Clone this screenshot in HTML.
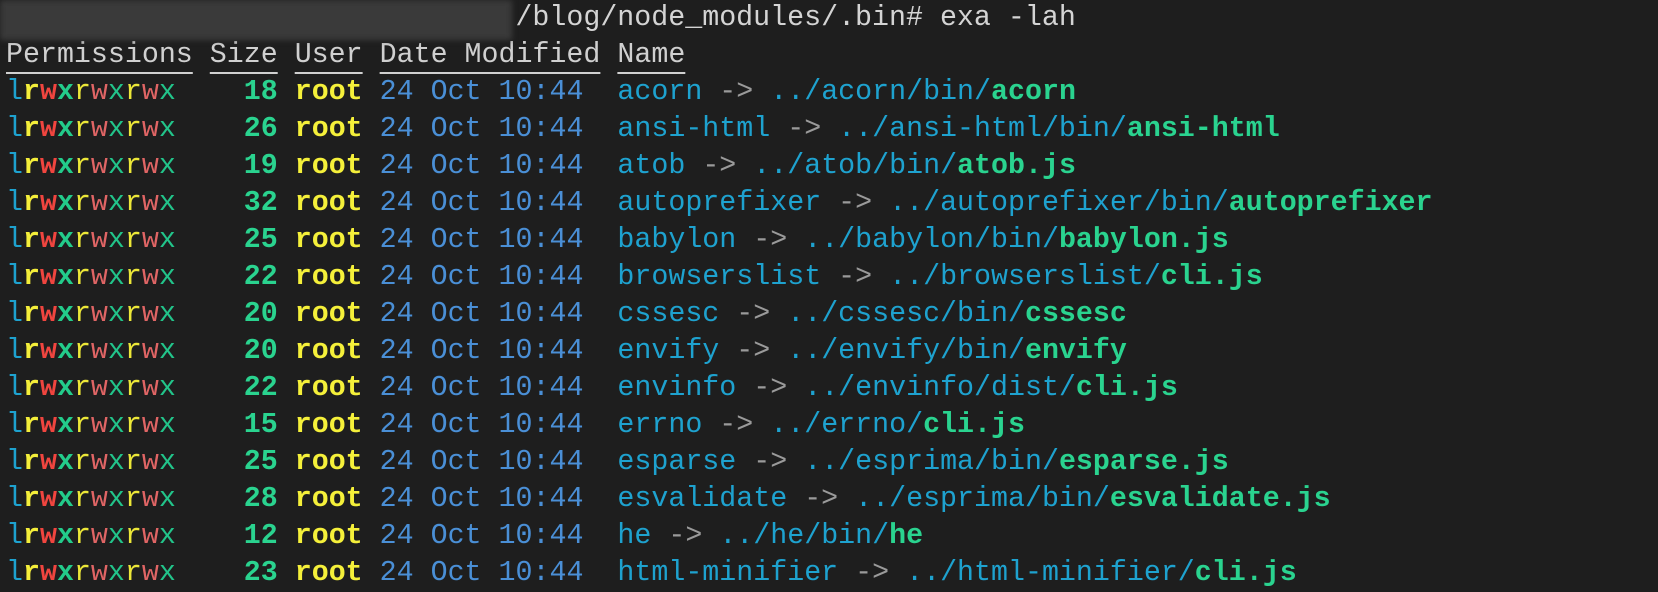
<!DOCTYPE html>
<html><head><meta charset="utf-8"><style>
html,body{margin:0;padding:0;background:#1e1e1e;width:1658px;height:592px;overflow:hidden}
pre{margin:0;padding:0 0 0 6px;font-family:"Liberation Mono","DejaVu Sans Mono",monospace;font-size:28.3px;line-height:37px;color:#d4d4d4;white-space:pre}
.blur{position:absolute;left:0;top:0;width:512px;height:40px;background:#3a3a3a;filter:blur(3px)}
.h{text-decoration:underline;text-decoration-thickness:2px;text-underline-offset:10px;color:#d0d0d0}
.c{color:#1ea2cf}.y{color:#f4ee3a;font-weight:bold}.R{color:#f0453f;font-weight:bold}.G{color:#23cc8b;font-weight:bold}
.yn{color:#ece738}.rn{color:#e06565}.gn{color:#22c48a}
.s{color:#2ad38f;font-weight:bold}.u{color:#f5f03a;font-weight:bold}.d{color:#4a8fd6}
.a{color:#9a9a9a}.t{color:#2ad38f;font-weight:bold}
</style></head><body>
<div class="blur"></div>
<pre>                              /blog/node_modules/.bin# exa -lah
<span class="h">Permissions</span> <span class="h">Size</span> <span class="h">User</span> <span class="h">Date Modified</span> <span class="h">Name</span>
<span class="c">l</span><span class="y">r</span><span class="R">w</span><span class="G">x</span><span class="yn">r</span><span class="rn">w</span><span class="gn">x</span><span class="yn">r</span><span class="rn">w</span><span class="gn">x</span>    <span class="s">18</span> <span class="u">root</span> <span class="d">24 Oct 10:44</span>  <span class="c">acorn</span> <span class="a">-&gt;</span> <span class="c">../acorn/bin/</span><span class="t">acorn</span>
<span class="c">l</span><span class="y">r</span><span class="R">w</span><span class="G">x</span><span class="yn">r</span><span class="rn">w</span><span class="gn">x</span><span class="yn">r</span><span class="rn">w</span><span class="gn">x</span>    <span class="s">26</span> <span class="u">root</span> <span class="d">24 Oct 10:44</span>  <span class="c">ansi-html</span> <span class="a">-&gt;</span> <span class="c">../ansi-html/bin/</span><span class="t">ansi-html</span>
<span class="c">l</span><span class="y">r</span><span class="R">w</span><span class="G">x</span><span class="yn">r</span><span class="rn">w</span><span class="gn">x</span><span class="yn">r</span><span class="rn">w</span><span class="gn">x</span>    <span class="s">19</span> <span class="u">root</span> <span class="d">24 Oct 10:44</span>  <span class="c">atob</span> <span class="a">-&gt;</span> <span class="c">../atob/bin/</span><span class="t">atob.js</span>
<span class="c">l</span><span class="y">r</span><span class="R">w</span><span class="G">x</span><span class="yn">r</span><span class="rn">w</span><span class="gn">x</span><span class="yn">r</span><span class="rn">w</span><span class="gn">x</span>    <span class="s">32</span> <span class="u">root</span> <span class="d">24 Oct 10:44</span>  <span class="c">autoprefixer</span> <span class="a">-&gt;</span> <span class="c">../autoprefixer/bin/</span><span class="t">autoprefixer</span>
<span class="c">l</span><span class="y">r</span><span class="R">w</span><span class="G">x</span><span class="yn">r</span><span class="rn">w</span><span class="gn">x</span><span class="yn">r</span><span class="rn">w</span><span class="gn">x</span>    <span class="s">25</span> <span class="u">root</span> <span class="d">24 Oct 10:44</span>  <span class="c">babylon</span> <span class="a">-&gt;</span> <span class="c">../babylon/bin/</span><span class="t">babylon.js</span>
<span class="c">l</span><span class="y">r</span><span class="R">w</span><span class="G">x</span><span class="yn">r</span><span class="rn">w</span><span class="gn">x</span><span class="yn">r</span><span class="rn">w</span><span class="gn">x</span>    <span class="s">22</span> <span class="u">root</span> <span class="d">24 Oct 10:44</span>  <span class="c">browserslist</span> <span class="a">-&gt;</span> <span class="c">../browserslist/</span><span class="t">cli.js</span>
<span class="c">l</span><span class="y">r</span><span class="R">w</span><span class="G">x</span><span class="yn">r</span><span class="rn">w</span><span class="gn">x</span><span class="yn">r</span><span class="rn">w</span><span class="gn">x</span>    <span class="s">20</span> <span class="u">root</span> <span class="d">24 Oct 10:44</span>  <span class="c">cssesc</span> <span class="a">-&gt;</span> <span class="c">../cssesc/bin/</span><span class="t">cssesc</span>
<span class="c">l</span><span class="y">r</span><span class="R">w</span><span class="G">x</span><span class="yn">r</span><span class="rn">w</span><span class="gn">x</span><span class="yn">r</span><span class="rn">w</span><span class="gn">x</span>    <span class="s">20</span> <span class="u">root</span> <span class="d">24 Oct 10:44</span>  <span class="c">envify</span> <span class="a">-&gt;</span> <span class="c">../envify/bin/</span><span class="t">envify</span>
<span class="c">l</span><span class="y">r</span><span class="R">w</span><span class="G">x</span><span class="yn">r</span><span class="rn">w</span><span class="gn">x</span><span class="yn">r</span><span class="rn">w</span><span class="gn">x</span>    <span class="s">22</span> <span class="u">root</span> <span class="d">24 Oct 10:44</span>  <span class="c">envinfo</span> <span class="a">-&gt;</span> <span class="c">../envinfo/dist/</span><span class="t">cli.js</span>
<span class="c">l</span><span class="y">r</span><span class="R">w</span><span class="G">x</span><span class="yn">r</span><span class="rn">w</span><span class="gn">x</span><span class="yn">r</span><span class="rn">w</span><span class="gn">x</span>    <span class="s">15</span> <span class="u">root</span> <span class="d">24 Oct 10:44</span>  <span class="c">errno</span> <span class="a">-&gt;</span> <span class="c">../errno/</span><span class="t">cli.js</span>
<span class="c">l</span><span class="y">r</span><span class="R">w</span><span class="G">x</span><span class="yn">r</span><span class="rn">w</span><span class="gn">x</span><span class="yn">r</span><span class="rn">w</span><span class="gn">x</span>    <span class="s">25</span> <span class="u">root</span> <span class="d">24 Oct 10:44</span>  <span class="c">esparse</span> <span class="a">-&gt;</span> <span class="c">../esprima/bin/</span><span class="t">esparse.js</span>
<span class="c">l</span><span class="y">r</span><span class="R">w</span><span class="G">x</span><span class="yn">r</span><span class="rn">w</span><span class="gn">x</span><span class="yn">r</span><span class="rn">w</span><span class="gn">x</span>    <span class="s">28</span> <span class="u">root</span> <span class="d">24 Oct 10:44</span>  <span class="c">esvalidate</span> <span class="a">-&gt;</span> <span class="c">../esprima/bin/</span><span class="t">esvalidate.js</span>
<span class="c">l</span><span class="y">r</span><span class="R">w</span><span class="G">x</span><span class="yn">r</span><span class="rn">w</span><span class="gn">x</span><span class="yn">r</span><span class="rn">w</span><span class="gn">x</span>    <span class="s">12</span> <span class="u">root</span> <span class="d">24 Oct 10:44</span>  <span class="c">he</span> <span class="a">-&gt;</span> <span class="c">../he/bin/</span><span class="t">he</span>
<span class="c">l</span><span class="y">r</span><span class="R">w</span><span class="G">x</span><span class="yn">r</span><span class="rn">w</span><span class="gn">x</span><span class="yn">r</span><span class="rn">w</span><span class="gn">x</span>    <span class="s">23</span> <span class="u">root</span> <span class="d">24 Oct 10:44</span>  <span class="c">html-minifier</span> <span class="a">-&gt;</span> <span class="c">../html-minifier/</span><span class="t">cli.js</span></pre>
</body></html>
